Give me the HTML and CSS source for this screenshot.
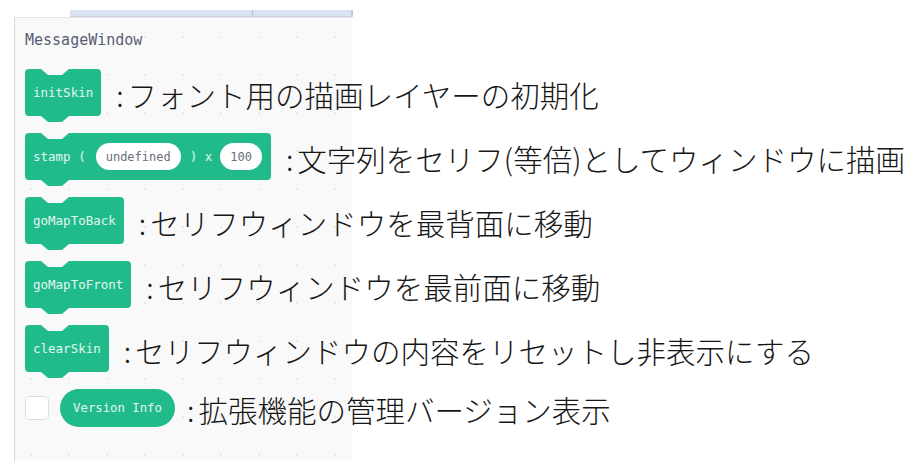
FILE: index.html
```html
<!DOCTYPE html>
<html lang="ja">
<head>
<meta charset="utf-8">
<title>MessageWindow</title>
<link rel="stylesheet" href="styles.css">
</head>
<body>
<div class="tabs">
  <div class="tab tab-a"></div>
  <div class="tab tab-b"></div>
</div>
<div class="panel">
  <div class="cat">MessageWindow</div>
  <div class="rows">
    <div class="row">
      <div class="block">initSkin</div>
      <div class="desc"><span class="colon">:</span>フォント用の描画レイヤーの初期化</div>
    </div>
    <div class="row">
      <div class="block">stamp (<span class="slot slot-wide">undefined</span>) x<span class="slot">100</span></div>
      <div class="desc"><span class="colon">:</span>文字列をセリフ(等倍)としてウィンドウに描画</div>
    </div>
    <div class="row">
      <div class="block">goMapToBack</div>
      <div class="desc"><span class="colon">:</span>セリフウィンドウを最背面に移動</div>
    </div>
    <div class="row">
      <div class="block">goMapToFront</div>
      <div class="desc"><span class="colon">:</span>セリフウィンドウを最前面に移動</div>
    </div>
    <div class="row">
      <div class="block">clearSkin</div>
      <div class="desc"><span class="colon">:</span>セリフウィンドウの内容をリセットし非表示にする</div>
    </div>
    <div class="row row-last">
      <div class="check"></div>
      <div class="reporter">Version Info</div>
      <div class="desc"><span class="colon">:</span>拡張機能の管理バージョン表示</div>
    </div>
  </div>
</div>
</body>
</html>
```

FILE: styles.css
```css
html, body {
  margin: 0;
  padding: 0;
  background: #ffffff;
  height: 100%;
  overflow: hidden;
}

.tabs {
  display: flex;
  margin-left: 70px;
  margin-top: 10px;
  width: 283px;
  height: 6px;
  background: #d9e2f0;
  border-bottom: 1px solid #c9d3e3;
}

.tab-a {
  width: 182px;
  border-right: 1px solid #b9c3d3;
}

.tab-b {
  flex: 1;
  border-right: 2px solid #c2ccdc;
}

.panel {
  margin-left: 14px;
  width: 338px;
  height: 444px;
  box-sizing: border-box;
  background-color: #f9f9f9;
  background-image: radial-gradient(circle, #e9e9e9 0.8px, transparent 1.2px);
  background-size: 38px 38px;
  background-position: -3px 0px;
  border-left: 1px solid #d8d8d8;
  border-top: 1px solid #e4e4e4;
  padding: 12px 0 0 10px;
}

.cat {
  font-family: "DejaVu Sans Mono", monospace;
  font-size: 15px;
  line-height: 20px;
  color: #575e75;
  white-space: nowrap;
}

.rows {
  display: flex;
  flex-direction: column;
  gap: 17px;
  margin-top: 19px;
}

.row {
  display: flex;
  align-items: center;
  height: 47px;
  white-space: nowrap;
}

.row > * {
  flex-shrink: 0;
}

.row-last {
  height: 38px;
}

.block {
  position: relative;
  display: inline-flex;
  align-items: center;
  box-sizing: border-box;
  height: 47px;
  padding: 0 8px;
  background: #21ba8b;
  border-radius: 4px;
  font-family: "DejaVu Sans Mono", monospace;
  font-size: 12.5px;
  color: #e2f6ef;
  white-space: pre;
}

.block::before,
.block::after {
  content: "";
  position: absolute;
  left: 16px;
  width: 28px;
  height: 6px;
  clip-path: polygon(0 0, 100% 0, 75% 100%, 25% 100%);
}

.block::before {
  top: 0;
  background: #f9f9f9;
}

.block::after {
  top: 100%;
  background: #21ba8b;
}

.slot {
  display: inline-flex;
  align-items: center;
  height: 27px;
  padding: 0 10px;
  margin: 0 7px 0 8px;
  background: #ffffff;
  border-radius: 14px;
  color: #6a6e7e;
  font-size: 12px;
}

.slot-wide {
  margin: 0 9px 0 10px;
}

.block .slot:last-child {
  margin-right: 1px;
}

.check {
  width: 24px;
  height: 24px;
  box-sizing: border-box;
  background: #ffffff;
  border: 1px solid #dedede;
  border-radius: 4px;
  margin-right: 11px;
}

.reporter {
  display: inline-flex;
  align-items: center;
  box-sizing: border-box;
  width: 115px;
  justify-content: center;
  height: 38px;
  background: #21ba8b;
  border-radius: 19px;
  font-family: "DejaVu Sans Mono", monospace;
  font-size: 12.3px;
  color: #e2f6ef;
}

.desc {
  font-family: "Noto Sans CJK JP", "Noto Sans", sans-serif;
  font-weight: 300;
  font-size: 29.5px;
  line-height: 1;
  color: #161616;
  padding-top: 4px;
  margin-left: 15px;
}

.row-last .desc {
  margin-left: 12px;
}

.colon {
  margin-right: 4px;
}
```
